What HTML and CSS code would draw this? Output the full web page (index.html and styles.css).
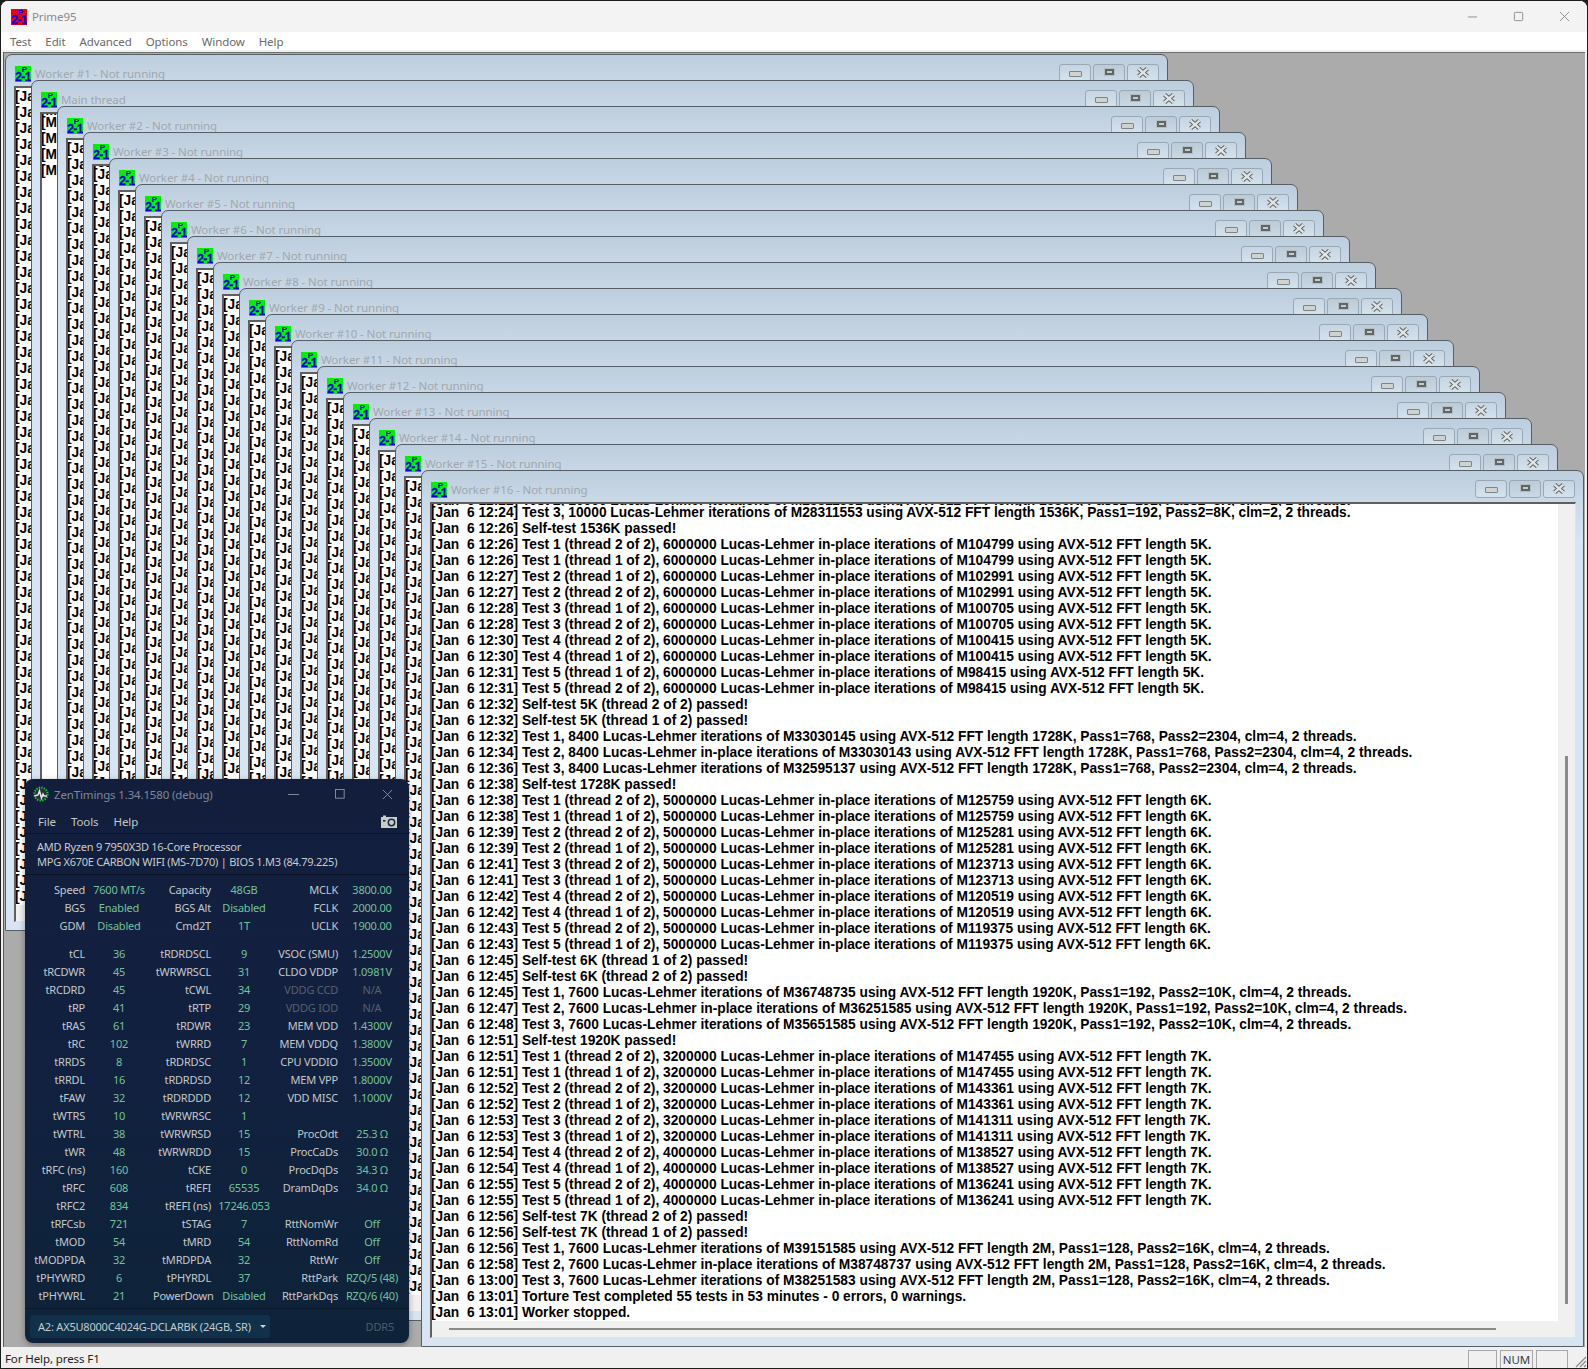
FILE: index.html
```html
<!DOCTYPE html>
<html lang="en">
<head>
<meta charset="utf-8">
<title>Prime95</title>
<link rel="stylesheet" href="styles.css">
</head>
<body>
<svg class="defs" aria-hidden="true">
<symbol id="p-icon" viewBox="0 0 16 16"><text x="9.5" y="6" class="ic-p">P</text><text x="8" y="15" class="ic-n">2-1</text></symbol>
<symbol id="x" viewBox="0 0 12 10"><path d="M2 1.5 10 8.5M10 1.5 2 8.5" stroke="#5f6468" stroke-width="4" fill="none"/><path d="M2 1.5 10 8.5M10 1.5 2 8.5" stroke="#e2e4e4" stroke-width="2.2" fill="none"/></symbol>
</svg>
<div class="app">
<header class="title">
<svg class="app-icon"><use href="#p-icon"/></svg>
<span class="app-name">Prime95</span>
<div class="caps">
<svg class="cap" viewBox="0 0 12 12"><path d="M1 6.5h10"/></svg>
<svg class="cap" viewBox="0 0 12 12"><rect x="1.5" y="1.5" width="9" height="9" rx="1"/></svg>
<svg class="cap" viewBox="0 0 12 12"><path d="M1 1l10 10M11 1 1 11"/></svg>
</div>
</header>
<nav class="menu"><span>Test</span><span>Edit</span><span>Advanced</span><span>Options</span><span>Window</span><span>Help</span></nav>
<main class="mdi">

<section class="win p0"><div class="tbar"><svg class="wi"><use href="#p-icon"/></svg><span class="tt">Worker #1 - Not running</span><div class="btns"><span class="b min"></span><span class="b max"></span><span class="b"><svg class="xi"><use href="#x"/></svg></span></div></div>
<div class="log"><div class="row"><div class="text"><pre>[Jan
[Jan
[Jan
[Jan
[Jan
[Jan
[Jan
[Jan
[Jan
[Jan
[Jan
[Jan
[Jan
[Jan
[Jan
[Jan
[Jan
[Jan
[Jan
[Jan
[Jan
[Jan
[Jan
[Jan
[Jan
[Jan
[Jan
[Jan
[Jan
[Jan
[Jan
[Jan
[Jan
[Jan
[Jan
[Jan
[Jan
[Jan
[Jan
[Jan
[Jan
[Jan
[Jan
[Jan
[Jan
[Jan
[Jan
[Jan
[Jan
[Jan
[Jan</pre></div></div></div></section>

<section class="win p1"><div class="tbar"><svg class="wi"><use href="#p-icon"/></svg><span class="tt">Main thread</span><div class="btns"><span class="b min"></span><span class="b max"></span><span class="b"><svg class="xi"><use href="#x"/></svg></span></div></div>
<div class="log"><div class="row"><div class="text"><div class="cut"><span>[Main</span></div><pre>[Main
[Main
[Main
[Main</pre></div></div></div></section>

<section class="win p2"><div class="tbar"><svg class="wi"><use href="#p-icon"/></svg><span class="tt">Worker #2 - Not running</span><div class="btns"><span class="b min"></span><span class="b max"></span><span class="b"><svg class="xi"><use href="#x"/></svg></span></div></div>
<div class="log"><div class="row"><div class="text"><pre>[Jan
[Jan
[Jan
[Jan
[Jan
[Jan
[Jan
[Jan
[Jan
[Jan
[Jan
[Jan
[Jan
[Jan
[Jan
[Jan
[Jan
[Jan
[Jan
[Jan
[Jan
[Jan
[Jan
[Jan
[Jan
[Jan
[Jan
[Jan
[Jan
[Jan
[Jan
[Jan
[Jan
[Jan
[Jan
[Jan
[Jan
[Jan
[Jan
[Jan
[Jan
[Jan
[Jan
[Jan
[Jan
[Jan
[Jan
[Jan
[Jan
[Jan
[Jan</pre></div></div></div></section>

<section class="win p3"><div class="tbar"><svg class="wi"><use href="#p-icon"/></svg><span class="tt">Worker #3 - Not running</span><div class="btns"><span class="b min"></span><span class="b max"></span><span class="b"><svg class="xi"><use href="#x"/></svg></span></div></div>
<div class="log"><div class="row"><div class="text"><div class="cut"><span>[Jan</span></div><pre>[Jan
[Jan
[Jan
[Jan
[Jan
[Jan
[Jan
[Jan
[Jan
[Jan
[Jan
[Jan
[Jan
[Jan
[Jan
[Jan
[Jan
[Jan
[Jan
[Jan
[Jan
[Jan
[Jan
[Jan
[Jan
[Jan
[Jan
[Jan
[Jan
[Jan
[Jan
[Jan
[Jan
[Jan
[Jan
[Jan
[Jan
[Jan
[Jan
[Jan
[Jan
[Jan
[Jan
[Jan
[Jan
[Jan
[Jan
[Jan
[Jan
[Jan
[Jan</pre></div></div></div></section>

<section class="win p4"><div class="tbar"><svg class="wi"><use href="#p-icon"/></svg><span class="tt">Worker #4 - Not running</span><div class="btns"><span class="b min"></span><span class="b max"></span><span class="b"><svg class="xi"><use href="#x"/></svg></span></div></div>
<div class="log"><div class="row"><div class="text"><pre>[Jan
[Jan
[Jan
[Jan
[Jan
[Jan
[Jan
[Jan
[Jan
[Jan
[Jan
[Jan
[Jan
[Jan
[Jan
[Jan
[Jan
[Jan
[Jan
[Jan
[Jan
[Jan
[Jan
[Jan
[Jan
[Jan
[Jan
[Jan
[Jan
[Jan
[Jan
[Jan
[Jan
[Jan
[Jan
[Jan
[Jan
[Jan
[Jan
[Jan
[Jan
[Jan
[Jan
[Jan
[Jan
[Jan
[Jan
[Jan
[Jan
[Jan
[Jan</pre></div></div></div></section>

<section class="win p5"><div class="tbar"><svg class="wi"><use href="#p-icon"/></svg><span class="tt">Worker #5 - Not running</span><div class="btns"><span class="b min"></span><span class="b max"></span><span class="b"><svg class="xi"><use href="#x"/></svg></span></div></div>
<div class="log"><div class="row"><div class="text"><pre>[Jan
[Jan
[Jan
[Jan
[Jan
[Jan
[Jan
[Jan
[Jan
[Jan
[Jan
[Jan
[Jan
[Jan
[Jan
[Jan
[Jan
[Jan
[Jan
[Jan
[Jan
[Jan
[Jan
[Jan
[Jan
[Jan
[Jan
[Jan
[Jan
[Jan
[Jan
[Jan
[Jan
[Jan
[Jan
[Jan
[Jan
[Jan
[Jan
[Jan
[Jan
[Jan
[Jan
[Jan
[Jan
[Jan
[Jan
[Jan
[Jan
[Jan
[Jan</pre></div></div></div></section>

<section class="win p6"><div class="tbar"><svg class="wi"><use href="#p-icon"/></svg><span class="tt">Worker #6 - Not running</span><div class="btns"><span class="b min"></span><span class="b max"></span><span class="b"><svg class="xi"><use href="#x"/></svg></span></div></div>
<div class="log"><div class="row"><div class="text"><pre>[Jan
[Jan
[Jan
[Jan
[Jan
[Jan
[Jan
[Jan
[Jan
[Jan
[Jan
[Jan
[Jan
[Jan
[Jan
[Jan
[Jan
[Jan
[Jan
[Jan
[Jan
[Jan
[Jan
[Jan
[Jan
[Jan
[Jan
[Jan
[Jan
[Jan
[Jan
[Jan
[Jan
[Jan
[Jan
[Jan
[Jan
[Jan
[Jan
[Jan
[Jan
[Jan
[Jan
[Jan
[Jan
[Jan
[Jan
[Jan
[Jan
[Jan
[Jan</pre></div></div></div></section>

<section class="win p7"><div class="tbar"><svg class="wi"><use href="#p-icon"/></svg><span class="tt">Worker #7 - Not running</span><div class="btns"><span class="b min"></span><span class="b max"></span><span class="b"><svg class="xi"><use href="#x"/></svg></span></div></div>
<div class="log"><div class="row"><div class="text"><pre>[Jan
[Jan
[Jan
[Jan
[Jan
[Jan
[Jan
[Jan
[Jan
[Jan
[Jan
[Jan
[Jan
[Jan
[Jan
[Jan
[Jan
[Jan
[Jan
[Jan
[Jan
[Jan
[Jan
[Jan
[Jan
[Jan
[Jan
[Jan
[Jan
[Jan
[Jan
[Jan
[Jan
[Jan
[Jan
[Jan
[Jan
[Jan
[Jan
[Jan
[Jan
[Jan
[Jan
[Jan
[Jan
[Jan
[Jan
[Jan
[Jan
[Jan
[Jan</pre></div></div></div></section>

<section class="win p8"><div class="tbar"><svg class="wi"><use href="#p-icon"/></svg><span class="tt">Worker #8 - Not running</span><div class="btns"><span class="b min"></span><span class="b max"></span><span class="b"><svg class="xi"><use href="#x"/></svg></span></div></div>
<div class="log"><div class="row"><div class="text"><pre>[Jan
[Jan
[Jan
[Jan
[Jan
[Jan
[Jan
[Jan
[Jan
[Jan
[Jan
[Jan
[Jan
[Jan
[Jan
[Jan
[Jan
[Jan
[Jan
[Jan
[Jan
[Jan
[Jan
[Jan
[Jan
[Jan
[Jan
[Jan
[Jan
[Jan
[Jan
[Jan
[Jan
[Jan
[Jan
[Jan
[Jan
[Jan
[Jan
[Jan
[Jan
[Jan
[Jan
[Jan
[Jan
[Jan
[Jan
[Jan
[Jan
[Jan
[Jan</pre></div></div></div></section>

<section class="win p9"><div class="tbar"><svg class="wi"><use href="#p-icon"/></svg><span class="tt">Worker #9 - Not running</span><div class="btns"><span class="b min"></span><span class="b max"></span><span class="b"><svg class="xi"><use href="#x"/></svg></span></div></div>
<div class="log"><div class="row"><div class="text"><pre>[Jan
[Jan
[Jan
[Jan
[Jan
[Jan
[Jan
[Jan
[Jan
[Jan
[Jan
[Jan
[Jan
[Jan
[Jan
[Jan
[Jan
[Jan
[Jan
[Jan
[Jan
[Jan
[Jan
[Jan
[Jan
[Jan
[Jan
[Jan
[Jan
[Jan
[Jan
[Jan
[Jan
[Jan
[Jan
[Jan
[Jan
[Jan
[Jan
[Jan
[Jan
[Jan
[Jan
[Jan
[Jan
[Jan
[Jan
[Jan
[Jan
[Jan
[Jan</pre></div></div></div></section>

<section class="win p10"><div class="tbar"><svg class="wi"><use href="#p-icon"/></svg><span class="tt">Worker #10 - Not running</span><div class="btns"><span class="b min"></span><span class="b max"></span><span class="b"><svg class="xi"><use href="#x"/></svg></span></div></div>
<div class="log"><div class="row"><div class="text"><pre>[Jan
[Jan
[Jan
[Jan
[Jan
[Jan
[Jan
[Jan
[Jan
[Jan
[Jan
[Jan
[Jan
[Jan
[Jan
[Jan
[Jan
[Jan
[Jan
[Jan
[Jan
[Jan
[Jan
[Jan
[Jan
[Jan
[Jan
[Jan
[Jan
[Jan
[Jan
[Jan
[Jan
[Jan
[Jan
[Jan
[Jan
[Jan
[Jan
[Jan
[Jan
[Jan
[Jan
[Jan
[Jan
[Jan
[Jan
[Jan
[Jan
[Jan
[Jan</pre></div></div></div></section>

<section class="win p11"><div class="tbar"><svg class="wi"><use href="#p-icon"/></svg><span class="tt">Worker #11 - Not running</span><div class="btns"><span class="b min"></span><span class="b max"></span><span class="b"><svg class="xi"><use href="#x"/></svg></span></div></div>
<div class="log"><div class="row"><div class="text"><pre>[Jan
[Jan
[Jan
[Jan
[Jan
[Jan
[Jan
[Jan
[Jan
[Jan
[Jan
[Jan
[Jan
[Jan
[Jan
[Jan
[Jan
[Jan
[Jan
[Jan
[Jan
[Jan
[Jan
[Jan
[Jan
[Jan
[Jan
[Jan
[Jan
[Jan
[Jan
[Jan
[Jan
[Jan
[Jan
[Jan
[Jan
[Jan
[Jan
[Jan
[Jan
[Jan
[Jan
[Jan
[Jan
[Jan
[Jan
[Jan
[Jan
[Jan
[Jan</pre></div></div></div></section>

<section class="win p12"><div class="tbar"><svg class="wi"><use href="#p-icon"/></svg><span class="tt">Worker #12 - Not running</span><div class="btns"><span class="b min"></span><span class="b max"></span><span class="b"><svg class="xi"><use href="#x"/></svg></span></div></div>
<div class="log"><div class="row"><div class="text"><pre>[Jan
[Jan
[Jan
[Jan
[Jan
[Jan
[Jan
[Jan
[Jan
[Jan
[Jan
[Jan
[Jan
[Jan
[Jan
[Jan
[Jan
[Jan
[Jan
[Jan
[Jan
[Jan
[Jan
[Jan
[Jan
[Jan
[Jan
[Jan
[Jan
[Jan
[Jan
[Jan
[Jan
[Jan
[Jan
[Jan
[Jan
[Jan
[Jan
[Jan
[Jan
[Jan
[Jan
[Jan
[Jan
[Jan
[Jan
[Jan
[Jan
[Jan
[Jan</pre></div></div></div></section>

<section class="win p13"><div class="tbar"><svg class="wi"><use href="#p-icon"/></svg><span class="tt">Worker #13 - Not running</span><div class="btns"><span class="b min"></span><span class="b max"></span><span class="b"><svg class="xi"><use href="#x"/></svg></span></div></div>
<div class="log"><div class="row"><div class="text"><pre>[Jan
[Jan
[Jan
[Jan
[Jan
[Jan
[Jan
[Jan
[Jan
[Jan
[Jan
[Jan
[Jan
[Jan
[Jan
[Jan
[Jan
[Jan
[Jan
[Jan
[Jan
[Jan
[Jan
[Jan
[Jan
[Jan
[Jan
[Jan
[Jan
[Jan
[Jan
[Jan
[Jan
[Jan
[Jan
[Jan
[Jan
[Jan
[Jan
[Jan
[Jan
[Jan
[Jan
[Jan
[Jan
[Jan
[Jan
[Jan
[Jan
[Jan
[Jan</pre></div></div></div></section>

<section class="win p14"><div class="tbar"><svg class="wi"><use href="#p-icon"/></svg><span class="tt">Worker #14 - Not running</span><div class="btns"><span class="b min"></span><span class="b max"></span><span class="b"><svg class="xi"><use href="#x"/></svg></span></div></div>
<div class="log"><div class="row"><div class="text"><pre>[Jan
[Jan
[Jan
[Jan
[Jan
[Jan
[Jan
[Jan
[Jan
[Jan
[Jan
[Jan
[Jan
[Jan
[Jan
[Jan
[Jan
[Jan
[Jan
[Jan
[Jan
[Jan
[Jan
[Jan
[Jan
[Jan
[Jan
[Jan
[Jan
[Jan
[Jan
[Jan
[Jan
[Jan
[Jan
[Jan
[Jan
[Jan
[Jan
[Jan
[Jan
[Jan
[Jan
[Jan
[Jan
[Jan
[Jan
[Jan
[Jan
[Jan
[Jan</pre></div></div></div></section>

<section class="win p15"><div class="tbar"><svg class="wi"><use href="#p-icon"/></svg><span class="tt">Worker #15 - Not running</span><div class="btns"><span class="b min"></span><span class="b max"></span><span class="b"><svg class="xi"><use href="#x"/></svg></span></div></div>
<div class="log"><div class="row"><div class="text"><pre>[Jan
[Jan
[Jan
[Jan
[Jan
[Jan
[Jan
[Jan
[Jan
[Jan
[Jan
[Jan
[Jan
[Jan
[Jan
[Jan
[Jan
[Jan
[Jan
[Jan
[Jan
[Jan
[Jan
[Jan
[Jan
[Jan
[Jan
[Jan
[Jan
[Jan
[Jan
[Jan
[Jan
[Jan
[Jan
[Jan
[Jan
[Jan
[Jan
[Jan
[Jan
[Jan
[Jan
[Jan
[Jan
[Jan
[Jan
[Jan
[Jan
[Jan
[Jan</pre></div></div></div></section>

<section class="win p16"><div class="tbar"><svg class="wi"><use href="#p-icon"/></svg><span class="tt">Worker #16 - Not running</span><div class="btns"><span class="b min"></span><span class="b max"></span><span class="b"><svg class="xi"><use href="#x"/></svg></span></div></div>
<div class="log"><div class="row"><div class="text"><div class="cut"><span>[Jan  6 12:22] Test 2, 10000 Lucas-Lehmer iterations of M28311551 using AVX-512 FFT length 1536K, Pass1=192, Pass2=8K, clm=2, 2 threads.</span></div><pre>[Jan  6 12:24] Test 3, 10000 Lucas-Lehmer iterations of M28311553 using AVX-512 FFT length 1536K, Pass1=192, Pass2=8K, clm=2, 2 threads.
[Jan  6 12:26] Self-test 1536K passed!
[Jan  6 12:26] Test 1 (thread 2 of 2), 6000000 Lucas-Lehmer in-place iterations of M104799 using AVX-512 FFT length 5K.
[Jan  6 12:26] Test 1 (thread 1 of 2), 6000000 Lucas-Lehmer in-place iterations of M104799 using AVX-512 FFT length 5K.
[Jan  6 12:27] Test 2 (thread 1 of 2), 6000000 Lucas-Lehmer in-place iterations of M102991 using AVX-512 FFT length 5K.
[Jan  6 12:27] Test 2 (thread 2 of 2), 6000000 Lucas-Lehmer in-place iterations of M102991 using AVX-512 FFT length 5K.
[Jan  6 12:28] Test 3 (thread 1 of 2), 6000000 Lucas-Lehmer in-place iterations of M100705 using AVX-512 FFT length 5K.
[Jan  6 12:28] Test 3 (thread 2 of 2), 6000000 Lucas-Lehmer in-place iterations of M100705 using AVX-512 FFT length 5K.
[Jan  6 12:30] Test 4 (thread 2 of 2), 6000000 Lucas-Lehmer in-place iterations of M100415 using AVX-512 FFT length 5K.
[Jan  6 12:30] Test 4 (thread 1 of 2), 6000000 Lucas-Lehmer in-place iterations of M100415 using AVX-512 FFT length 5K.
[Jan  6 12:31] Test 5 (thread 1 of 2), 6000000 Lucas-Lehmer in-place iterations of M98415 using AVX-512 FFT length 5K.
[Jan  6 12:31] Test 5 (thread 2 of 2), 6000000 Lucas-Lehmer in-place iterations of M98415 using AVX-512 FFT length 5K.
[Jan  6 12:32] Self-test 5K (thread 2 of 2) passed!
[Jan  6 12:32] Self-test 5K (thread 1 of 2) passed!
[Jan  6 12:32] Test 1, 8400 Lucas-Lehmer iterations of M33030145 using AVX-512 FFT length 1728K, Pass1=768, Pass2=2304, clm=4, 2 threads.
[Jan  6 12:34] Test 2, 8400 Lucas-Lehmer in-place iterations of M33030143 using AVX-512 FFT length 1728K, Pass1=768, Pass2=2304, clm=4, 2 threads.
[Jan  6 12:36] Test 3, 8400 Lucas-Lehmer iterations of M32595137 using AVX-512 FFT length 1728K, Pass1=768, Pass2=2304, clm=4, 2 threads.
[Jan  6 12:38] Self-test 1728K passed!
[Jan  6 12:38] Test 1 (thread 2 of 2), 5000000 Lucas-Lehmer in-place iterations of M125759 using AVX-512 FFT length 6K.
[Jan  6 12:38] Test 1 (thread 1 of 2), 5000000 Lucas-Lehmer in-place iterations of M125759 using AVX-512 FFT length 6K.
[Jan  6 12:39] Test 2 (thread 2 of 2), 5000000 Lucas-Lehmer in-place iterations of M125281 using AVX-512 FFT length 6K.
[Jan  6 12:39] Test 2 (thread 1 of 2), 5000000 Lucas-Lehmer in-place iterations of M125281 using AVX-512 FFT length 6K.
[Jan  6 12:41] Test 3 (thread 2 of 2), 5000000 Lucas-Lehmer in-place iterations of M123713 using AVX-512 FFT length 6K.
[Jan  6 12:41] Test 3 (thread 1 of 2), 5000000 Lucas-Lehmer in-place iterations of M123713 using AVX-512 FFT length 6K.
[Jan  6 12:42] Test 4 (thread 2 of 2), 5000000 Lucas-Lehmer in-place iterations of M120519 using AVX-512 FFT length 6K.
[Jan  6 12:42] Test 4 (thread 1 of 2), 5000000 Lucas-Lehmer in-place iterations of M120519 using AVX-512 FFT length 6K.
[Jan  6 12:43] Test 5 (thread 2 of 2), 5000000 Lucas-Lehmer in-place iterations of M119375 using AVX-512 FFT length 6K.
[Jan  6 12:43] Test 5 (thread 1 of 2), 5000000 Lucas-Lehmer in-place iterations of M119375 using AVX-512 FFT length 6K.
[Jan  6 12:45] Self-test 6K (thread 1 of 2) passed!
[Jan  6 12:45] Self-test 6K (thread 2 of 2) passed!
[Jan  6 12:45] Test 1, 7600 Lucas-Lehmer iterations of M36748735 using AVX-512 FFT length 1920K, Pass1=192, Pass2=10K, clm=4, 2 threads.
[Jan  6 12:47] Test 2, 7600 Lucas-Lehmer in-place iterations of M36251585 using AVX-512 FFT length 1920K, Pass1=192, Pass2=10K, clm=4, 2 threads.
[Jan  6 12:48] Test 3, 7600 Lucas-Lehmer iterations of M35651585 using AVX-512 FFT length 1920K, Pass1=192, Pass2=10K, clm=4, 2 threads.
[Jan  6 12:51] Self-test 1920K passed!
[Jan  6 12:51] Test 1 (thread 2 of 2), 3200000 Lucas-Lehmer in-place iterations of M147455 using AVX-512 FFT length 7K.
[Jan  6 12:51] Test 1 (thread 1 of 2), 3200000 Lucas-Lehmer in-place iterations of M147455 using AVX-512 FFT length 7K.
[Jan  6 12:52] Test 2 (thread 2 of 2), 3200000 Lucas-Lehmer in-place iterations of M143361 using AVX-512 FFT length 7K.
[Jan  6 12:52] Test 2 (thread 1 of 2), 3200000 Lucas-Lehmer in-place iterations of M143361 using AVX-512 FFT length 7K.
[Jan  6 12:53] Test 3 (thread 2 of 2), 3200000 Lucas-Lehmer in-place iterations of M141311 using AVX-512 FFT length 7K.
[Jan  6 12:53] Test 3 (thread 1 of 2), 3200000 Lucas-Lehmer in-place iterations of M141311 using AVX-512 FFT length 7K.
[Jan  6 12:54] Test 4 (thread 2 of 2), 4000000 Lucas-Lehmer in-place iterations of M138527 using AVX-512 FFT length 7K.
[Jan  6 12:54] Test 4 (thread 1 of 2), 4000000 Lucas-Lehmer in-place iterations of M138527 using AVX-512 FFT length 7K.
[Jan  6 12:55] Test 5 (thread 2 of 2), 4000000 Lucas-Lehmer in-place iterations of M136241 using AVX-512 FFT length 7K.
[Jan  6 12:55] Test 5 (thread 1 of 2), 4000000 Lucas-Lehmer in-place iterations of M136241 using AVX-512 FFT length 7K.
[Jan  6 12:56] Self-test 7K (thread 2 of 2) passed!
[Jan  6 12:56] Self-test 7K (thread 1 of 2) passed!
[Jan  6 12:56] Test 1, 7600 Lucas-Lehmer iterations of M39151585 using AVX-512 FFT length 2M, Pass1=128, Pass2=16K, clm=4, 2 threads.
[Jan  6 12:58] Test 2, 7600 Lucas-Lehmer in-place iterations of M38748737 using AVX-512 FFT length 2M, Pass1=128, Pass2=16K, clm=4, 2 threads.
[Jan  6 13:00] Test 3, 7600 Lucas-Lehmer iterations of M38251583 using AVX-512 FFT length 2M, Pass1=128, Pass2=16K, clm=4, 2 threads.
[Jan  6 13:01] Torture Test completed 55 tests in 53 minutes - 0 errors, 0 warnings.
[Jan  6 13:01] Worker stopped.</pre></div><div class="vs"><i></i></div></div><div class="hs"><i></i></div></div></section>

<section class="zen">
<div class="zt"><svg class="zi" viewBox="0 0 16 16"><circle cx="8" cy="8" r="6.6" fill="#26323a" stroke="#22c03a" stroke-width="2" stroke-dasharray="1.4 1.2"/><path d="M1.5 10 5 9l1.5-4 2 7 1.5-4 1 2h3" fill="none" stroke="#e4e8e6" stroke-width="1.5"/></svg><span class="zn">ZenTimings 1.34.1580 (debug)</span>
<div class="zc"><svg viewBox="0 0 12 12"><path d="M0 6h12"/></svg><svg viewBox="0 0 12 12"><rect x=".5" y=".5" width="9.5" height="9.5"/></svg><svg viewBox="0 0 12 12"><path d="M1 1l10 10M11 1 1 11"/></svg></div></div>
<div class="zm"><span>File</span><span>Tools</span><span>Help</span><svg class="cam" viewBox="0 0 16 13"><path d="M0 2h2V.5h3V2h11v11H0z" fill="#c8ccc9"/><circle cx="10.5" cy="7.5" r="3.2" fill="#c8ccc9" stroke="#1f2a40" stroke-width="1.5"/><rect x="2" y="5" width="2.5" height="1.6" fill="#1f2a40"/></svg></div>
<div class="zinfo"><div>AMD Ryzen 9 7950X3D 16-Core Processor</div><div>MPG X670E CARBON WIFI (MS-7D70) | BIOS 1.M3 (84.79.225)</div></div>
<div class="zgrid">
<span>Speed</span><b>7600 MT/s</b><span>Capacity</span><b>48GB</b><span>MCLK</span><b>3800.00</b>
<span>BGS</span><b>Enabled</b><span>BGS Alt</span><b>Disabled</b><span>FCLK</span><b>2000.00</b>
<span>GDM</span><b>Disabled</b><span>Cmd2T</span><b>1T</b><span>UCLK</span><b>1900.00</b>
<div class="gap"></div>
<span>tCL</span><b>36</b><span>tRDRDSCL</span><b>9</b><span>VSOC (SMU)</span><b>1.2500V</b>
<span>tRCDWR</span><b>45</b><span>tWRWRSCL</span><b>31</b><span>CLDO VDDP</span><b>1.0981V</b>
<span>tRCDRD</span><b>45</b><span>tCWL</span><b>34</b><span class="dim">VDDG CCD</span><b class="dim">N/A</b>
<span>tRP</span><b>41</b><span>tRTP</span><b>29</b><span class="dim">VDDG IOD</span><b class="dim">N/A</b>
<span>tRAS</span><b>61</b><span>tRDWR</span><b>23</b><span>MEM VDD</span><b>1.4300V</b>
<span>tRC</span><b>102</b><span>tWRRD</span><b>7</b><span>MEM VDDQ</span><b>1.3800V</b>
<span>tRRDS</span><b>8</b><span>tRDRDSC</span><b>1</b><span>CPU VDDIO</span><b>1.3500V</b>
<span>tRRDL</span><b>16</b><span>tRDRDSD</span><b>12</b><span>MEM VPP</span><b>1.8000V</b>
<span>tFAW</span><b>32</b><span>tRDRDDD</span><b>12</b><span>VDD MISC</span><b>1.1000V</b>
<span>tWTRS</span><b>10</b><span>tWRWRSC</span><b>1</b><span></span><b></b>
<span>tWTRL</span><b>38</b><span>tWRWRSD</span><b>15</b><span>ProcOdt</span><b>25.3 Ω</b>
<span>tWR</span><b>48</b><span>tWRWRDD</span><b>15</b><span>ProcCaDs</span><b>30.0 Ω</b>
<span>tRFC (ns)</span><b>160</b><span>tCKE</span><b>0</b><span>ProcDqDs</span><b>34.3 Ω</b>
<span>tRFC</span><b>608</b><span>tREFI</span><b>65535</b><span>DramDqDs</span><b>34.0 Ω</b>
<span>tRFC2</span><b>834</b><span>tREFI (ns)</span><b>17246.053</b><span></span><b></b>
<span>tRFCsb</span><b>721</b><span>tSTAG</span><b>7</b><span>RttNomWr</span><b>Off</b>
<span>tMOD</span><b>54</b><span>tMRD</span><b>54</b><span>RttNomRd</span><b>Off</b>
<span>tMODPDA</span><b>32</b><span>tMRDPDA</span><b>32</b><span>RttWr</span><b>Off</b>
<span>tPHYWRD</span><b>6</b><span>tPHYRDL</span><b>37</b><span>RttPark</span><b>RZQ/5 (48)</b>
<span>tPHYWRL</span><b>21</b><span>PowerDown</span><b>Disabled</b><span>RttParkDqs</span><b>RZQ/6 (40)</b>
</div>
<div class="zf"><div class="dd"><span>A2: AX5U8000C4024G-DCLARBK (24GB, SR)</span><i class="caret"></i></div><span class="ddr">DDR5</span></div>
</section>
</main>
<footer class="status">
<span class="help">For Help, press F1</span>
<span class="pan p-a"></span><span class="pan p-b">NUM</span><span class="pan p-c"></span>
<svg class="grip" viewBox="0 0 14 14"><path d="M13 3 3 13M13 7 7 13M13 11 11 13" stroke="#8a8a8a" stroke-width="1.2"/></svg>
</footer>
</div>
</body>
</html>
```
FILE: styles.css
```css
html, body { margin: 0; height: 100%; overflow: hidden; background: #1c1c1c; }
.defs { position: absolute; width: 0; height: 0; }
.ic-p { font: bold 8px "Liberation Sans", sans-serif; text-anchor: middle; fill: #0000e6; }
.ic-n { font: bold 12px "Liberation Sans", sans-serif; text-anchor: middle; fill: #0000e6; stroke: #0000e6; stroke-width: .3px; letter-spacing: -0.6px; }

.app {
  box-sizing: border-box; width: 1588px; height: 1369px; border: 1px solid #1c1c1c; border-radius: 8px 8px 0 0;
  background: #f0f0f0; display: flex; flex-direction: column; overflow: hidden;
  font-family: "Noto Sans", "Open Sans", sans-serif;
}
.title { height: 31px; flex: none; display: flex; align-items: center; background: #f3f3f3; padding-left: 10px; }
.app-icon { width: 16px; height: 16px; background: #f00000; }
.app-name { margin-left: 5px; font-size: 11.5px; letter-spacing: -0.1px; color: #8a8a8a; }
.caps { margin-left: auto; display: flex; align-items: center; }
.cap { width: 11px; height: 11px; margin-right: 35px; fill: none; stroke: #8a8a8a; stroke-width: 1; }
.cap:last-child { margin-right: 17px; }
.menu { height: 18px; flex: none; box-sizing: border-box; padding: 2px 0 0 9px; background: #fff; display: flex; align-items: center; font-size: 11.5px; letter-spacing: -0.1px; color: #6a6a6a; gap: 14px; }
.menu span { line-height: 16px; }

.mdi {
  position: relative; flex: 1; margin: 2px 2px 0; background: #ababab; overflow: hidden;
  border-top: 1px solid #6f6f6f; border-left: 1px solid #5a5a5a;
}

.win {
  position: absolute; box-sizing: border-box; width: 1163px; height: 877px; display: flex; flex-direction: column;
  border: 1px solid #565e66; border-radius: 7px 7px 1px 1px; padding: 0 7px 8px 8px;
  background: linear-gradient(#bccddd, #cbdae8 32px, #d7e5f2 70px);
}
.p0 { left: 1px; top: 1px; } .p1 { left: 27px; top: 27px; } .p2 { left: 53px; top: 53px; } .p3 { left: 79px; top: 79px; }
.p4 { left: 105px; top: 105px; } .p5 { left: 131px; top: 131px; } .p6 { left: 157px; top: 157px; } .p7 { left: 183px; top: 183px; }
.p8 { left: 209px; top: 209px; } .p9 { left: 235px; top: 235px; } .p10 { left: 261px; top: 261px; } .p11 { left: 287px; top: 287px; }
.p12 { left: 313px; top: 313px; } .p13 { left: 339px; top: 339px; } .p14 { left: 365px; top: 365px; } .p15 { left: 391px; top: 391px; }
.p16 { left: 417px; top: 417px; }

.tbar { height: 31px; flex: none; box-sizing: border-box; padding-top: 6px; display: flex; align-items: center; }
.wi { width: 16px; height: 16px; margin-left: 1px; background: #00f000; flex: none; }
.tt { margin-left: 4px; font-size: 11.5px; letter-spacing: -0.1px; color: #a1a7ad; white-space: nowrap; }
.btns { margin-left: auto; display: flex; gap: 2px; margin-right: 1px; margin-top: -2px; }
.b {
  box-sizing: border-box; width: 32px; height: 18px; border: 1px solid #9aa8b6; border-radius: 3px;
  display: flex; align-items: center; justify-content: center;
  background: linear-gradient(#c6d5e3, #d5e2ee);
}
.min::after { content: ""; width: 11px; height: 4px; background: #cfd2cd; border: 1px solid #7d8387; border-radius: 1px; margin-top: 3px; }
.max { background: linear-gradient(#bccbd9, #cbd9e6); }
.max::after { content: ""; width: 5px; height: 2px; background: #c8ccc8; border: 2px solid #60656a; outline: 1px solid #b5bcc2; margin-top: -2px; }
.xi { width: 14px; height: 11px; }

.log {
  flex: 1; min-height: 0; display: flex; flex-direction: column; background: #f0f0f0;
  border-left: 2px solid #5f5f5f; border-top: 2px solid #5f5f5f; border-right: 1px solid #dfe3e6; border-bottom: 1px solid #dfe3e6;
}
.row { flex: 1; min-height: 0; margin-bottom: 16px; display: flex; }
.text { flex: 1; min-width: 0; background: #fff; overflow: hidden; }
.text pre, .cut {
  margin: 0 0 0 -1px; font: bold 13.75px/16px "Liberation Sans", Arial, sans-serif; color: #000; white-space: pre;
}
.text pre { padding-top: 1px; }
.cut { height: 2px; margin-bottom: -2px; overflow: hidden; display: flex; align-items: flex-end; line-height: 10px; }
.vs { width: 17px; flex: none; box-sizing: border-box; padding-top: 252px; display: flex; justify-content: center; }
.vs i { width: 3px; height: 548px; background: #8a8a8a; }
.hs { margin-top: -16px; height: 16px; padding-left: 17px; display: flex; align-items: center; }
.hs i { width: 1047px; height: 2px; background: #8a8a8a; }

.zen {
  position: absolute; left: 21px; top: 726px; width: 384px; height: 564px; border-radius: 8px; box-sizing: border-box;
  background: linear-gradient(#131e3c, #122040 40%, #0e2339); color: #c4c8cb; font-size: 11px; letter-spacing: -0.2px;
  display: flex; flex-direction: column; box-shadow: 0 2px 6px rgba(0,0,0,.35);
}
.zt { height: 32px; flex: none; box-sizing: border-box; padding: 0 0 2px 8px; display: flex; align-items: center; color: #7f8898; }
.zi { width: 16px; height: 16px; }
.zn { margin-left: 5px; font-size: 11.5px; letter-spacing: -0.15px; }
.zc { margin-left: auto; display: flex; gap: 36px; margin-right: 16px; }
.zc svg { width: 11px; height: 11px; fill: none; stroke: #8b93a0; stroke-width: 1; }
.zm { height: 23px; flex: none; box-sizing: border-box; display: flex; align-items: center; gap: 15px; padding: 0 12px 2px 13px; font-size: 11.5px; letter-spacing: -0.1px; border-bottom: 1px solid #0b1324; }
.cam { width: 16px; height: 13px; margin-left: auto; }
.zinfo { height: 41px; flex: none; box-sizing: border-box; padding: 5px 12px 0; line-height: 15px; border-bottom: 1px solid #0b1324; letter-spacing: -0.25px; color: #c8ccce; }
.zgrid { flex: 1; display: grid; grid-template-columns: 60px 68px 58px 66px 61px 68px; grid-template-rows: repeat(3, 18px) 10px; grid-auto-rows: 18px; align-items: center; padding-top: 5px; }
.zgrid span { text-align: right; white-space: nowrap; }
.zgrid b { font-weight: 400; color: #73c29c; text-align: center; white-space: nowrap; }
.zgrid .dim { color: #56606e; }
.gap { grid-column: 1 / -1; height: 10px; }
.zf { height: 34px; flex: none; display: flex; align-items: center; border-top: 1px solid #0a1a2c; padding: 0 15px 0 5px; justify-content: space-between; }
.dd { width: 240px; height: 23px; box-sizing: border-box; background: #11304a; border-radius: 3px; display: flex; align-items: center; padding-left: 8px; white-space: nowrap; color: #c4cbd0; }
.caret { margin-left: 9px; border: 3px solid transparent; border-top: 3px solid #d0d4d8; border-bottom: 0; }
.ddr { color: #4f5a66; }

.status { height: 21px; flex: none; display: flex; align-items: flex-end; font-size: 11.5px; letter-spacing: -0.1px; color: #222; background: #f0f0f0; position: relative; }
.help { margin-left: 4px; margin-right: auto; line-height: 19px; }
.pan { box-sizing: border-box; height: 18px; border: 1px solid #a8a8a8; border-width: 1px 1px 0 1px; line-height: 17px; text-align: center; color: #34424e; }
.p-a { width: 29px; margin-right: 3px; }
.p-b { width: 33px; margin-right: 3px; }
.p-c { width: 32px; margin-right: 19px; }
.grip { position: absolute; right: 0; bottom: 0; width: 14px; height: 14px; }
```
